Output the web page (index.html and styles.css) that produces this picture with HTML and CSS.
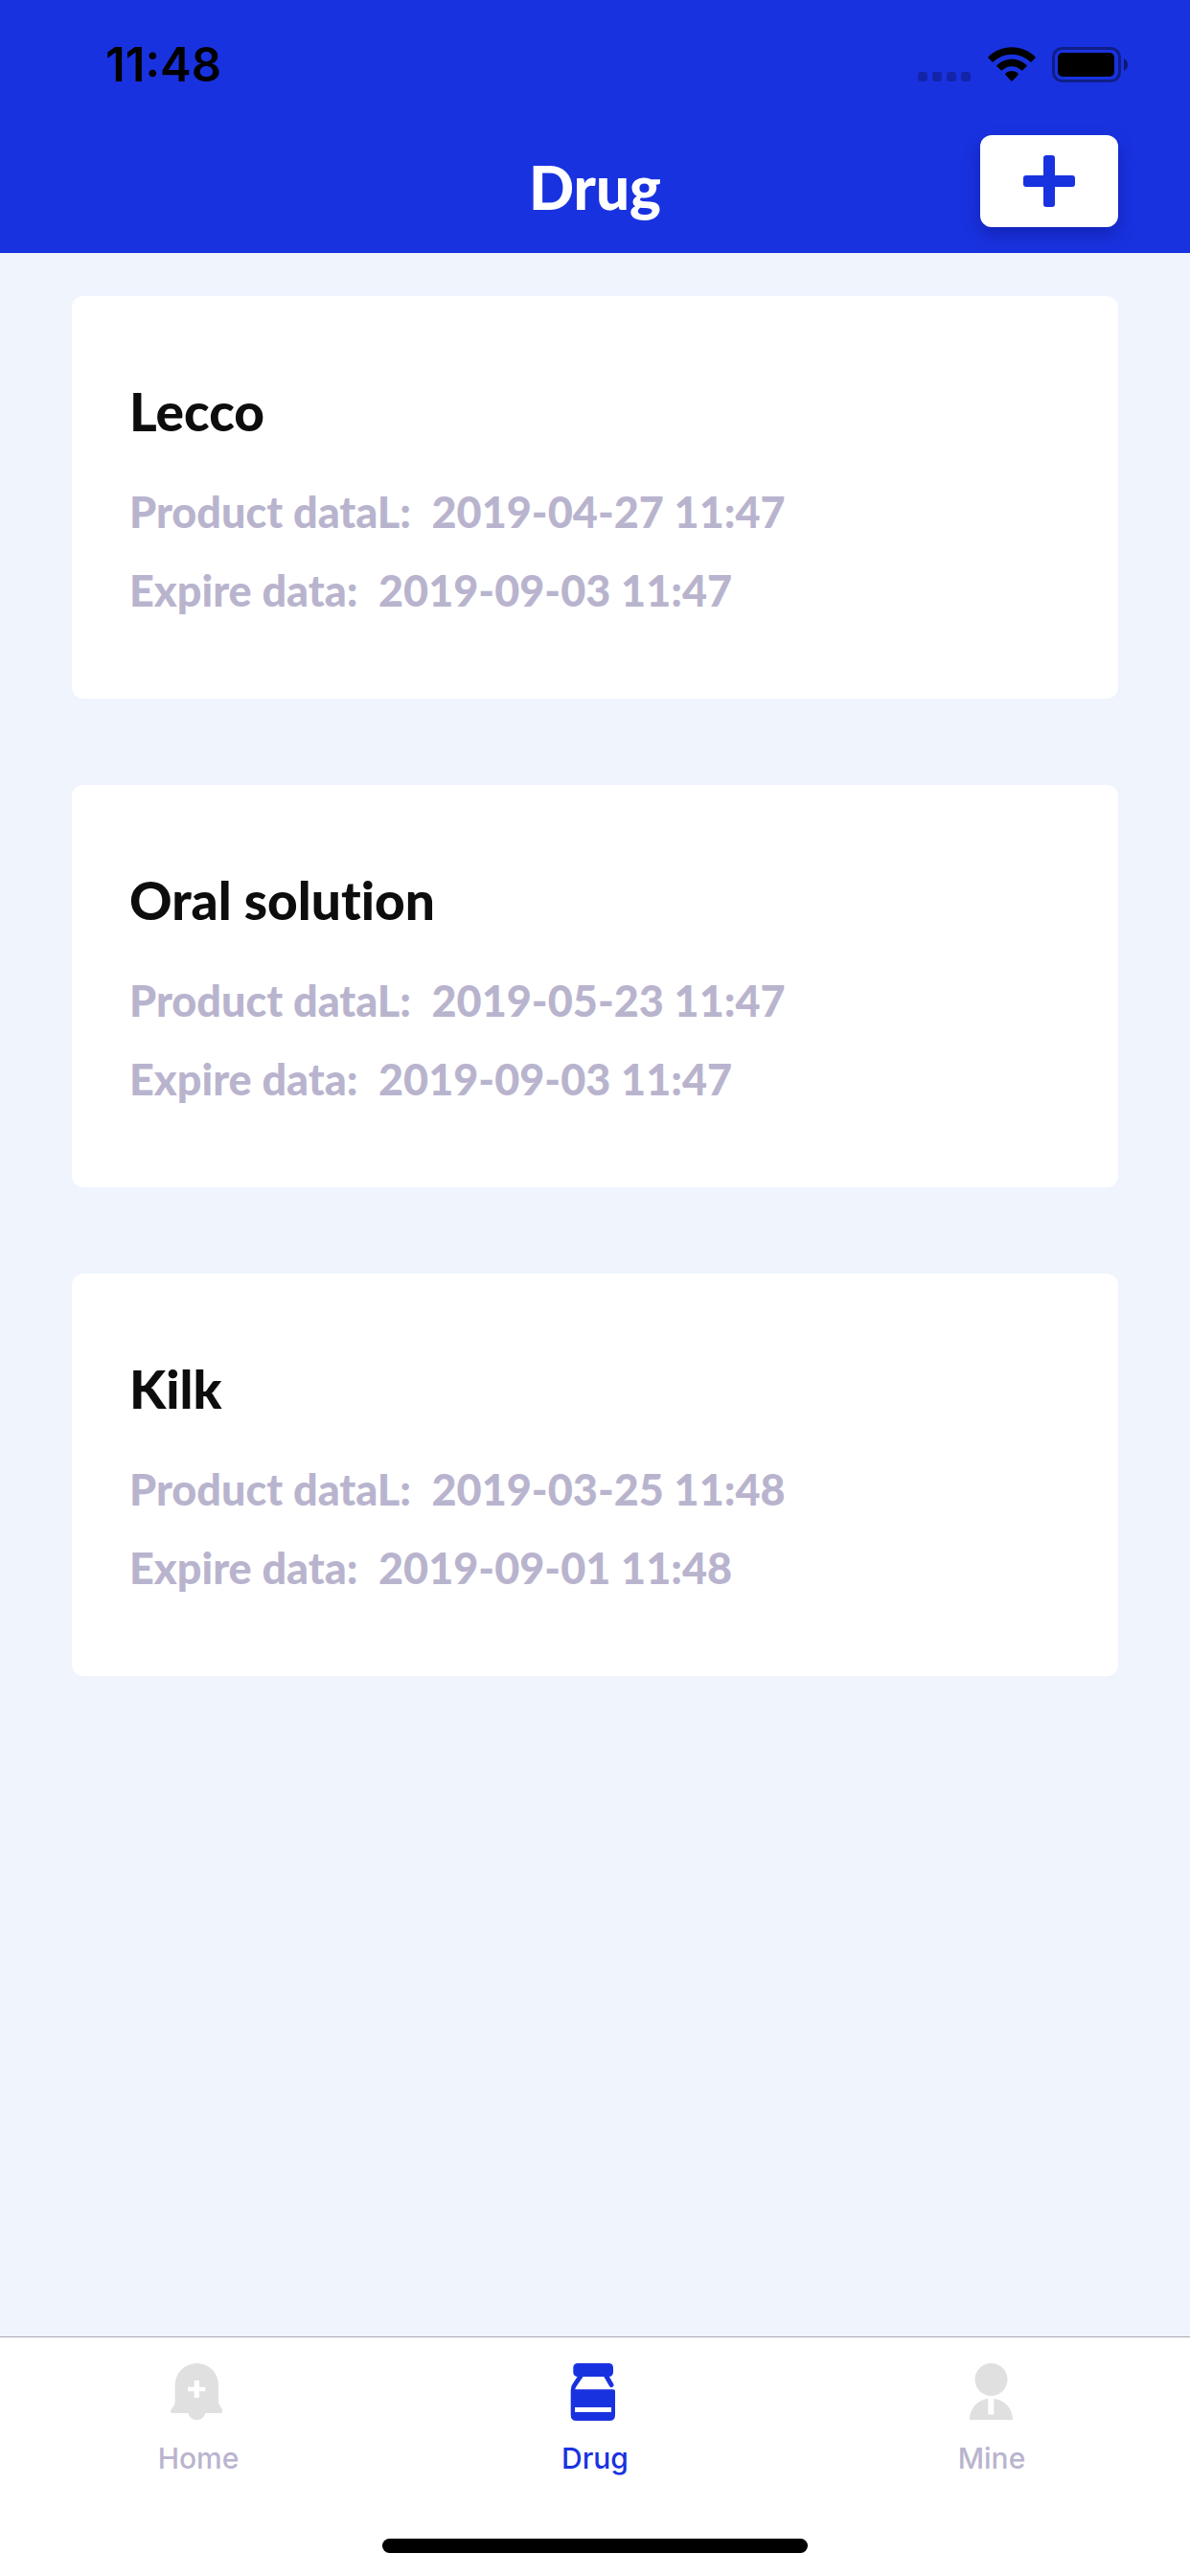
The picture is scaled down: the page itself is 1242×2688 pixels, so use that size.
FILE: index.html
```html
<!DOCTYPE html>
<html lang="en">
<head>
  <meta charset="utf-8">
  <meta name="viewport" content="width=device-width, initial-scale=1">
  <title>Drug</title>
  <link rel="stylesheet" href="styles.css">
</head>
<body>
  <div class="app">
    <header class="header">
      <div class="status-bar">
        <span class="status-time">11:48</span>
        <div class="status-icons">
          <svg class="icon-signal" viewBox="0 0 56 38" aria-hidden="true">
            <g fill="#000" fill-opacity=".25"><rect x="0" y="26" width="10" height="10" rx="3"/><rect x="15" y="26" width="10" height="10" rx="3"/><rect x="30" y="26" width="10" height="10" rx="3"/><rect x="45" y="26" width="10" height="10" rx="3"/></g>
          </svg>
          <svg class="icon-wifi" viewBox="0 0 50 38" aria-hidden="true">
            <path d="M25 .3C34.500 .3 43 4 49.500 10.200Q50 11 49.500 11.600L45.500 15.500Q44.800 16 44.200 15.500C39 10.700 32.500 7.800 25 7.800S11 10.700 5.800 15.500Q5.200 16 4.500 15.500L.5 11.600Q0 11 .5 10.200C7 4 15.500 .3 25 .3Z"/>
            <path d="M25 12.700C31 12.700 36.500 15 40.500 19Q41 19.600 40.500 20.200L36.300 24.300Q35.700 24.800 35 24.300C32.300 21.800 29 20.200 25 20.200S17.700 21.800 15 24.300Q14.300 24.800 13.700 24.300L9.500 20.200Q9 19.600 9.500 19C13.500 15 19 12.700 25 12.700Z"/>
            <path d="M25 25C27.600 25 30 26 31.700 27.700Q32.200 28.400 31.700 29L25.600 35.400Q25 36 24.400 35.400L18.300 29Q17.800 28.400 18.300 27.700C20 26 22.400 25 25 25Z"/>
          </svg>
          <svg class="icon-battery" viewBox="0 0 80 38" aria-hidden="true">
            <rect x="1.500" y="1.500" width="69" height="34" rx="9" fill="none" stroke="#000" stroke-opacity=".4" stroke-width="3"/>
            <rect x="6" y="6" width="59" height="25" rx="5"/>
            <path d="M75 12C80.300 14.500 80.300 22.500 75 25Z" fill-opacity=".5"/>
          </svg>
        </div>
      </div>
      <div class="nav-bar">
        <h1 class="nav-title">Drug</h1>
        <button class="add-button" type="button" aria-label="Add drug">
          <svg class="icon-plus" viewBox="0 0 54 54" aria-hidden="true"><rect x="21" width="12" height="54" rx="3"/><rect y="21" width="54" height="12" rx="3"/></svg>
        </button>
      </div>
    </header>

    <main class="drug-list">
      <article class="card">
        <h2 class="card-title">Lecco</h2>
        <p class="card-line">Product dataL:&nbsp; 2019-04-27 11:47</p>
        <p class="card-line">Expire data:&nbsp; 2019-09-03 11:47</p>
      </article>
      <article class="card">
        <h2 class="card-title">Oral solution</h2>
        <p class="card-line">Product dataL:&nbsp; 2019-05-23 11:47</p>
        <p class="card-line">Expire data:&nbsp; 2019-09-03 11:47</p>
      </article>
      <article class="card">
        <h2 class="card-title">Kilk</h2>
        <p class="card-line">Product dataL:&nbsp; 2019-03-25 11:48</p>
        <p class="card-line">Expire data:&nbsp; 2019-09-01 11:48</p>
      </article>
    </main>

    <footer class="footer">
      <nav class="tab-bar">
        <a class="tab" href="#home">
          <svg class="tab-icon" viewBox="0 0 60 60" aria-hidden="true">
            <path fill="#e0e0e0" d="M28.300 0A22.600 22.600 0 0 1 51 22.600V41.500L54.500 47.500C56 50 55 52 52.500 52H37.300A9.200 9.200 0 0 1 19.300 52H3.500C1 52 .2 50 1.800 48C4 45.500 5.700 43.500 5.700 40V22.600A22.600 22.600 0 0 1 28.300 0Z"/>
            <path fill="#fff" d="M25.700 18H31V24.700H37.300V29.300H31V36H25.700V29.300H19V24.700H25.700Z"/>
          </svg>
          <span>Home</span>
        </a>
        <a class="tab tab-active" href="#drug" aria-current="page">
          <svg class="tab-icon" viewBox="0 0 60 60" aria-hidden="true">
            <rect x="7.300" y="0" width="41.700" height="14" rx="4.500" fill="#1932e0"/>
            <path fill="#1932e0" d="M12.300 13H18.300L11 23.500Q9.300 26 9.300 27.300H49Q51 27.300 51 29.300V54Q51 60 45 60H10.700Q4.700 60 4.700 54V28Q4.700 24 7 21Z"/>
            <path d="M41.500 13L47.200 22.800" fill="none" stroke="#1932e0" stroke-width="4.800" stroke-linecap="round"/>
            <rect x="9" y="46" width="38" height="5" fill="#fff"/>
          </svg>
          <span>Drug</span>
        </a>
        <a class="tab" href="#mine">
          <svg class="tab-icon" viewBox="0 0 60 60" aria-hidden="true">
            <circle cx="29.500" cy="17" r="17" fill="#e0e0e0"/>
            <path fill="#e0e0e0" d="M7 59C7 47 15.500 38 26.300 37V53.500H32.300V37C43.500 38 52 47 52 59Z"/>
          </svg>
          <span>Mine</span>
        </a>
      </nav>
      <div class="home-indicator"></div>
    </footer>
  </div>
</body>
</html>
```
FILE: styles.css
```css
* {
  box-sizing: border-box;
}

body {
  margin: 0;
  background: #eff4fd;
  font-family: Lato, "Liberation Sans", sans-serif;
  font-variant-ligatures: none;
}

h1,
h2,
p {
  margin: 0;
}

.app {
  display: flex;
  flex-direction: column;
  min-height: 100vh;
}

.header {
  background: #1932e0;
}

.status-bar {
  display: flex;
  justify-content: space-between;
  align-items: center;
  height: 132px;
  padding: 4px 64px 0 110px;
}

.status-time {
  font: 600 49px/60px Inter, sans-serif;
}

.status-icons {
  display: flex;
  gap: 17px;
}

.icon-signal {
  width: 56px;
  height: 38px;
}

.icon-wifi {
  width: 50px;
  height: 38px;
}

.icon-battery {
  width: 80px;
  height: 38px;
}

.nav-bar {
  display: grid;
  grid-template-columns: 1fr auto 1fr;
  align-items: center;
  padding: 9px 75px 27px;
}

.nav-title {
  grid-column: 2;
  padding-top: 12px;
  color: #fff;
  font-size: 62px;
  font-weight: 900;
  line-height: 72px;
}

.add-button {
  display: flex;
  justify-content: center;
  justify-self: end;
  width: 144px;
  height: 96px;
  padding: 21px;
  border: 0;
  border-radius: 12px;
  background: #fff;
  box-shadow: 0 8px 18px rgba(0, 0, 80, 0.3);
}

.icon-plus {
  width: 54px;
  height: 54px;
  fill: #1932e0;
}

.drug-list {
  display: flex;
  flex: 1;
  flex-direction: column;
  gap: 90px;
  padding: 45px 75px;
}

.card {
  padding: 84px 60px 72px;
  border-radius: 12px;
  background: #fff;
}

.card-title {
  margin-bottom: 28px;
  color: #0d0d0d;
  font-size: 55px;
  font-weight: 900;
  line-height: 72px;
}

.card-line {
  color: #b9b4ce;
  font-size: 45px;
  font-weight: 900;
  line-height: 82px;
}

.footer {
  border-top: 1px solid #a7a9b4;
  background: #fff;
}

.tab-bar {
  display: grid;
  grid-template-columns: repeat(3, 1fr);
  padding-top: 27px;
}

.tab {
  display: flex;
  flex-direction: column;
  align-items: center;
  gap: 21px;
  color: #b9b4ce;
  font: 500 30px/36px Inter, sans-serif;
  text-decoration: none;
}

.tab-active {
  color: #1932e0;
}

.tab-icon {
  width: 60px;
  height: 60px;
}

.home-indicator {
  width: 444px;
  height: 15px;
  margin: 66px auto 24px;
  border-radius: 8px;
  background: #000;
}
```
